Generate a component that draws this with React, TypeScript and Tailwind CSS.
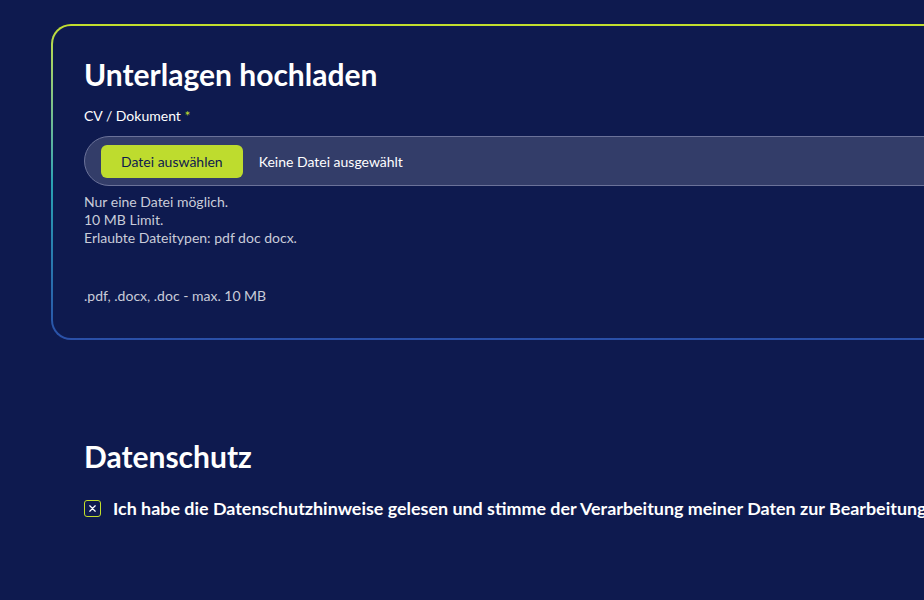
import React from 'react';

export default function App() {
  return (
    <div
      className="min-h-[600px] w-full overflow-hidden bg-[#0e1a4f] text-white"
      style={{ fontFamily: 'Lato, "Open Sans", sans-serif' }}
    >
      <div className="pt-6 pl-[51px]">
        {/* Upload card with gradient border */}
        <div className="w-[1000px] rounded-[20px] bg-gradient-to-b from-[#c2de2c] via-[#2aa3b3] to-[#2a4fa8] p-[2px]">
          <div className="rounded-[18px] bg-[#0e1a4f] px-[31px] pt-[28px] pb-[33px]">
            <h2 className="text-[30px] font-bold leading-[40px]">Unterlagen hochladen</h2>
            <div className="mt-[12px] text-[14px] leading-[20px]">
              CV / Dokument <span className="text-[#c2de2c]">*</span>
            </div>
            <div className="mt-[10px] flex h-[50px] items-center rounded-full border border-[#6b7299] bg-[#333d69] pl-4">
              <button className="h-[33px] rounded-[6px] bg-[#bedc2e] px-5 text-[14px] text-[#0e1a4f]">
                Datei auswählen
              </button>
              <span className="ml-4 text-[14px]">Keine Datei ausgewählt</span>
            </div>
            <div className="mt-[7px] text-[14px] leading-[18px] text-[#c9ccd9]">
              <p>Nur eine Datei möglich.</p>
              <p>10 MB Limit.</p>
              <p>Erlaubte Dateitypen: pdf doc docx.</p>
            </div>
            <p className="mt-[40px] text-[14px] leading-[18px] text-[#c9ccd9]">.pdf, .docx, .doc - max. 10 MB</p>
          </div>
        </div>
      </div>

      {/* Privacy section */}
      <div className="mt-[96px] pl-[84px]">
        <h2 className="text-[30px] font-bold leading-[40px]">Datenschutz</h2>
        <label className="mt-[19px] flex items-center gap-3 whitespace-nowrap">
          <span className="flex h-[17px] w-[17px] shrink-0 items-center justify-center rounded-[3px] border border-[#c2de2c]">
            <svg viewBox="0 0 10 10" className="h-[9px] w-[9px]" fill="none" stroke="white" strokeWidth="1.4" strokeLinecap="round">
              <path d="M2 2l6 6M8 2l-6 6" />
            </svg>
          </span>
          <span className="text-[17.9px] font-bold">
            Ich habe die Datenschutzhinweise gelesen und stimme der Verarbeitung meiner Daten zur Bearbeitung meiner Bewerbung zu.
          </span>
        </label>
      </div>
    </div>
  );
}
